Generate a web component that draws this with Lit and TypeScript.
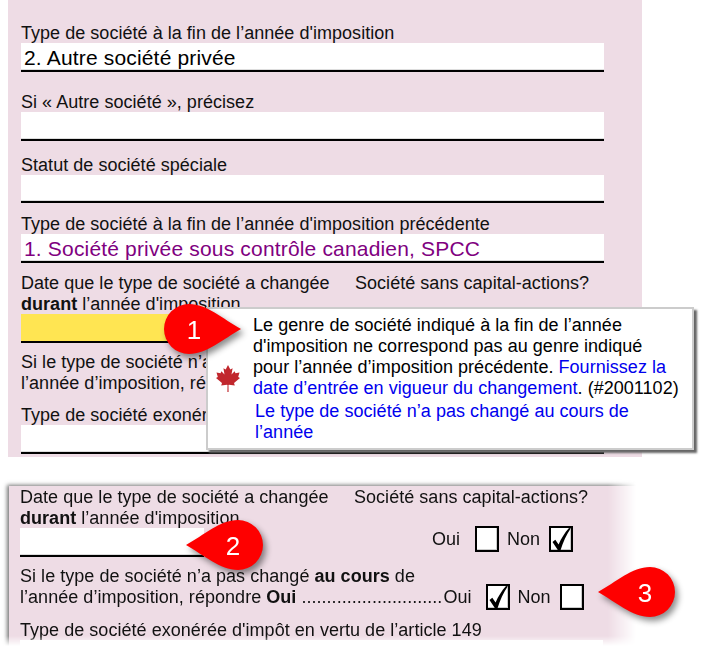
import { LitElement, html, css, svg } from "lit";
import { customElement } from "lit/decorators.js";

const CALLOUTS = [
  { n: "1", cx: 189, cy: 328.5, dir: 1 },
  { n: "2", cx: 238, cy: 545, dir: -1 },
  { n: "3", cx: 650, cy: 592, dir: -1 },
];

const check = html`<svg class="tick" viewBox="0 0 20 22"><path d="M1.5 14 L4.3 11.8 L7.6 16.5 C10.2 10.5 13.5 5 18 0 L19.8 0.3 C15.5 7 12 14 9.6 22 L6.8 22 Z" fill="#000"/></svg>`;
const box = (on: boolean) => html`<span class="box">${on ? check : ""}</span>`;

@customElement("app-root")
export class AppRoot extends LitElement {
  static styles = css`
    :host { display: block; width: 704px; height: 648px; overflow: hidden; position: relative; background: #fff;
      font-family: "Liberation Sans", Arial, sans-serif; font-size: 18px; line-height: 21px; letter-spacing: 0.035px; color: #111; }
    .panel { background: #eedce5; box-sizing: border-box; width: 634px; }
    .top { margin-left: 8px; height: 457px; padding: 22px 38px 0 13px; }
    .wrap { margin-top: 19px; height: 172px; padding: 10px 0 0 9px; box-sizing: border-box;
      -webkit-mask-image: linear-gradient(to right, #000 608px, transparent 636px), linear-gradient(to bottom, #000 160px, transparent 170px);
      -webkit-mask-composite: source-in; mask-composite: intersect; }
    .bottom { height: 170px; padding: 0 40px 0 11px; box-shadow: -2px -1px 4px #777; }
    .label, .two, .clip { white-space: nowrap; padding-top: 1px; margin-bottom: -1px; }
    .field { background: #fff; border-bottom: 2px solid #000; box-shadow: inset 0 -1px #ddd; height: 27px; box-sizing: content-box;
      padding-left: 3px; font-size: 21px; line-height: 29px; letter-spacing: 0.17px; color: #000; white-space: nowrap; }
    .purple { color: #800080; }
    .short { height: 26px; }
    .g19 { margin-top: 19px; } .g13 { margin-top: 13px; } .g10 { margin-top: 10px; }
    .g9 { margin-top: 9px; } .g8 { margin-top: 8px; } .g11 { margin-top: 11px; }
    .two { display: flex; }
    .two > span:first-child { width: 334px; flex: none; }
    .daterow { display: flex; align-items: flex-start; }
    .date { width: 181px; flex: none; }
    .yellow { background: #ffe552; box-shadow: none; }
    .opts { display: flex; align-items: center; margin-left: 228px; margin-top: -2px; height: 26px; }
    .opts .oui { width: 43px; } .opts .non { margin: 0 9px 0 8px; }
    .sirow { display: flex; align-items: center; height: 26px; margin-top: -3px; white-space: nowrap; }
    .sirow .lead { margin-right: 1px; }
    .sirow .oui { margin-right: 14px; } .sirow .non { margin: 0 9px 0 8px; }
    .box { display: inline-flex; width: 24px; height: 26px; box-sizing: border-box; border: 2px solid #000; background: #fff;
      box-shadow: inset -1px -1px #ccc; align-items: center; justify-content: center; flex: none; }
    .tick { width: 20px; height: 22px; display: block; }
    .tip { position: absolute; left: 206px; top: 307px; width: 488px; height: 143px; box-sizing: border-box; background: #fff;
      border: 2px solid #ccc; box-shadow: 3px 3px 2px #666; display: flex; padding: 6px 0 0 8px; white-space: nowrap; color: #000; }
    .leaf { width: 24px; height: 27px; flex: none; margin: 50px 13px 0 0; }
    .blue { color: #0000ee; }
    .more { display: block; margin: 2px 0 0 2px; }
    .callout { position: absolute; width: 90px; height: 70px; overflow: visible; filter: drop-shadow(3px 4px 3px rgba(0,0,0,.45)); }
    .callout text { font-family: "Liberation Sans", Arial, sans-serif; font-size: 26px; fill: #fff; }
  `;

  private dateLabel() {
    return html`<span>Date que le type de société a changée<br /><b>durant</b> l’année d'imposition</span><span>Société sans capital-actions?</span>`;
  }

  private callout(c: { n: string; cx: number; cy: number; dir: number }) {
    const right = c.dir > 0;
    const x = right ? c.cx - 30 : c.cx - 60;
    const body = "M0 -25 C18 -25 34 -10 52 0 C34 10 18 25 0 25 A25 25 0 0 1 0 -25 Z";
    return html`<svg class="callout" style="left:${x}px;top:${c.cy - 30}px" viewBox="${right ? -30 : -60} -30 90 70">
      ${svg`<path d=${body} fill="#fe0000" transform=${right ? "" : "scale(-1,1)"} />
      <text x=${5 * c.dir} y="9.5" text-anchor="middle">${c.n}</text>`}
    </svg>`;
  }

  render() {
    return html`
      <div class="panel top">
        <div class="label">Type de société à la fin de l’année d'imposition</div>
        <div class="field">2. Autre société privée</div>
        <div class="label g19">Si « Autre société », précisez</div>
        <div class="field"></div>
        <div class="label g13">Statut de société spéciale</div>
        <div class="field short"></div>
        <div class="label g10">Type de société à la fin de l’année d'imposition précédente</div>
        <div class="field purple">1. Société privée sous contrôle canadien, SPCC</div>
        <div class="two g9">${this.dateLabel()}</div>
        <div class="daterow"><div class="field date yellow"></div></div>
        <div class="clip g8">Si le type de société n’a<br />l’année d’imposition, ré</div>
        <div class="clip g11">Type de société exonér</div>
        <div class="field"></div>
      </div>
      <div class="wrap">
        <div class="panel bottom">
          <div class="two">${this.dateLabel()}</div>
          <div class="daterow">
            <div class="field date"></div>
            <div class="opts"><span class="oui">Oui</span>${box(false)}<span class="non">Non</span>${box(true)}</div>
          </div>
          <div class="label g8">Si le type de société n’a pas changé <b>au cours</b> de</div>
          <div class="sirow"><span class="lead">l’année d’imposition, répondre <b>Oui</b> ............................</span><span class="oui">Oui</span>${box(true)}<span class="non">Non</span>${box(false)}</div>
          <div class="label g9">Type de société exonérée d'impôt en vertu de l’article 149</div>
          <div class="field"></div>
        </div>
      </div>
      <div class="tip">
        <svg class="leaf" viewBox="0 0 24 27"><path fill="#c1272d" d="M12 0 L14.3 4.5 L16.6 3.3 L15.5 9.5 L18.6 6.3 L19.5 8.2 L23.5 7.5 L22.2 12 L24 13 L18 18 L18.8 20.5 L13 19.7 L12.5 20 L12.6 27 H11.4 L11.5 20 L11 19.7 L5.2 20.5 L6 18 L0 13 L1.8 12 L0.5 7.5 L4.5 8.2 L5.4 6.3 L8.5 9.5 L7.4 3.3 L9.7 4.5 Z"/></svg>
        <div>
          Le genre de société indiqué à la fin de l’année<br />
          d'imposition ne correspond pas au genre indiqué<br />
          pour l’année d’imposition précédente. <span class="blue">Fournissez la<br />
          date d’entrée en vigueur du changement</span>. (#2001102)
          <span class="more blue">Le type de société n’a pas changé au cours de<br />l’année</span>
        </div>
      </div>
      ${CALLOUTS.map((c) => this.callout(c))}
    `;
  }
}
